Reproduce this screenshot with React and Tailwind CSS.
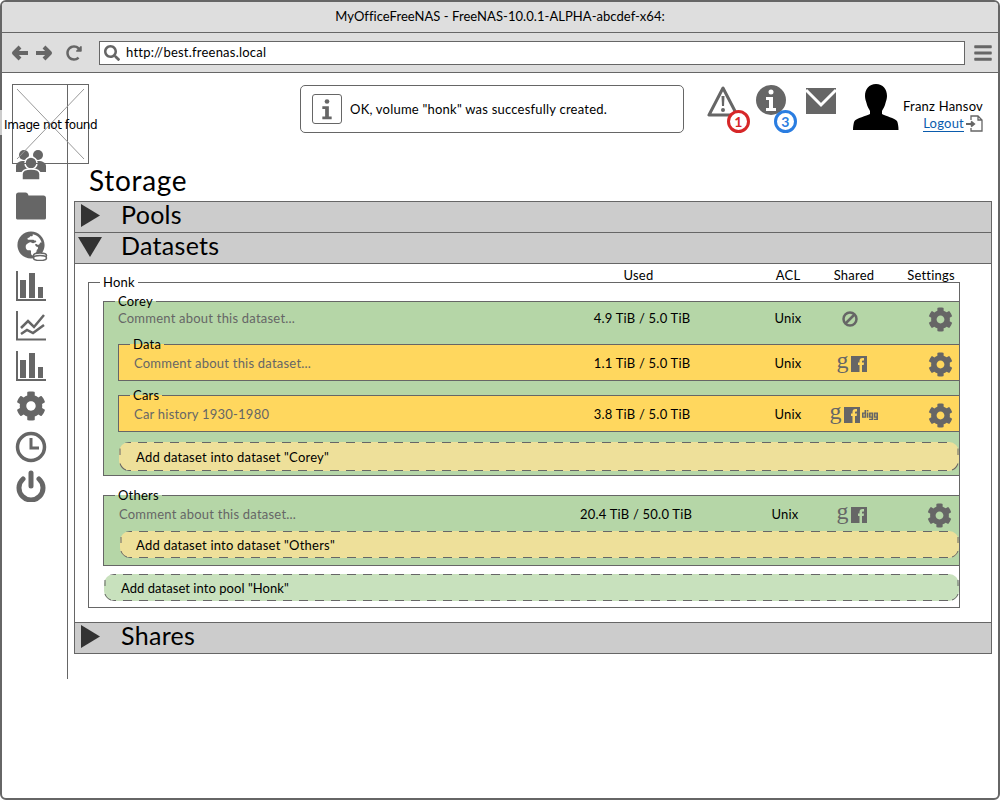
import { FaBars, FaCog, FaDigg, FaGlobeAfrica, FaRedoAlt, FaSearch } from 'react-icons/fa';

function UsersIcon() {
  return (
    <svg width="32" height="32" viewBox="0 0 32 32" fill="#666">
      <circle cx="9" cy="6" r="5" />
      <circle cx="23" cy="6" r="5" />
      <path d="M1 23v-6c0-3 3-5 8-5s8 2 8 5v6zM15 23v-6c0-3 3-5 8-5s8 2 8 5v6z" />
      <circle cx="16" cy="14" r="6" stroke="#fff" strokeWidth="1.500" />
      <path d="M7 31v-6c0-3 3-5 9-5s9 2 9 5v6z" stroke="#fff" strokeWidth="1.500" />
    </svg>
  );
}

function FolderIcon() {
  return (
    <svg width="32" height="30" viewBox="0 0 32 30" fill="#666">
      <path d="M1 4c0-1.500 1-2.500 2.500-2.500h7c1.500 0 2.500 1 3 3h15c1.500 0 2.500 1 2.500 2.500v20c0 1-1 1.500-2 1.500H3c-1 0-2-.5-2-1.500z" />
    </svg>
  );
}

function BarsIcon() {
  return (
    <svg width="32" height="30" viewBox="0 0 32 30" fill="#666">
      <path d="M1 0h2v28h28v2H1zM5 9h6v18H5zM14 2h6v25h-6zM23 16h5v11h-5z" />
    </svg>
  );
}

function LineIcon() {
  return (
    <svg width="32" height="30" viewBox="0 0 32 30" fill="none" stroke="#666">
      <path d="M2 0v28.500h29" strokeWidth="2" />
      <path d="M6 17l7-7 6 6 10-12M6 23l6-4 6 3 11-8" strokeWidth="2.500" />
    </svg>
  );
}

function ClockIcon() {
  return (
    <svg width="32" height="32" viewBox="0 0 32 32" fill="none" stroke="#666" strokeWidth="3.500">
      <circle cx="16" cy="16" r="13.500" />
      <path d="M16 7v10h8" strokeWidth="3" />
    </svg>
  );
}

function PowerIcon() {
  return (
    <svg width="30" height="32" viewBox="0 0 30 32" fill="none" stroke="#666" strokeWidth="5" strokeLinecap="round" className="-mt-[3px]">
      <path d="M15 3v13" />
      <path d="M7 9a12 12 0 1 0 16 0" />
    </svg>
  );
}

function ArrowIcon({ flip, className }) {
  return (
    <svg width="17" height="16" viewBox="0 0 17 16" fill="none" stroke="#666" strokeWidth="4" strokeLinejoin="round" className={`${flip ? '-scale-x-100' : ''} ${className}`}>
      <path d="M17 8H3M9 2L3 8l6 6" />
    </svg>
  );
}

function InfoGlyph({ color }) {
  return (
    <g fill={color}>
      <circle cx="15" cy="7" r="2.500" />
      <path d="M10 12h7v11h3v3H10v-3h3v-8h-3z" />
    </g>
  );
}

function WarningIcon() {
  return (
    <svg width="32" height="32" viewBox="0 0 32 32" fill="none">
      <path d="M16 3L2 30h28z" stroke="#666" strokeWidth="3" strokeLinejoin="round" />
      <path d="M14.500 11h3l-.5 10h-2z" fill="#666" />
      <circle cx="16" cy="25" r="2" fill="#666" />
    </svg>
  );
}

function MailIcon() {
  return (
    <svg width="32" height="26" viewBox="0 0 32 26">
      <path d="M1 0h30v26H1z" fill="#666" />
      <path d="M1 2l15 15L31 2" fill="none" stroke="#fff" strokeWidth="3" />
    </svg>
  );
}

function AvatarIcon() {
  return (
    <svg width="46" height="46" viewBox="0 0 46 46" fill="#000">
      <path d="M23 0c7 0 11 5 11 12 0 3-1 5-1.500 7-.5 3-2.500 6-3.500 8v3c3 2 13 4 15 7 1 2 1.500 6 1.500 9H0c0-3 .5-7 1.500-9 2-3 12-5 15.500-7v-3c-1-2-3-5-3.500-8C13 17 12 15 12 12 12 5 16 0 23 0z" />
    </svg>
  );
}

function LogoutIcon() {
  return (
    <svg width="17" height="17" viewBox="0 0 17 17" fill="none" stroke="#666" strokeWidth="1.300">
      <path d="M5 5V1h7l4 4v11H5v-3M12 1v4h4" />
      <path d="M0 9h7M5 6.500L8 9l-3 2.500" strokeWidth="2" />
    </svg>
  );
}

function BanIcon() {
  return (
    <svg width="16" height="16" viewBox="0 0 16 16" fill="none" stroke="#666" strokeWidth="2.500">
      <circle cx="8" cy="8" r="6.500" />
      <path d="M4 12l8-8" />
    </svg>
  );
}

function FacebookIcon() {
  return (
    <svg width="16" height="16" viewBox="0 0 16 16">
      <path fillRule="evenodd" fill="#666" d="M0 0h16v16H0zM8.500 16h2.500V9h1.700l.3-2.500h-2v-1c0-.7.3-1 1-1h1V2h-1.500c-2 0-3 1-3 3v1.500H7V9h1.500z" />
    </svg>
  );
}

function SideIcons() {
  return (
    <div className="flex flex-col items-center gap-[10px] pt-[65px] pr-[7px]">
      <UsersIcon />
      <FolderIcon />
      <div className="relative h-[30px]">
        <FaGlobeAfrica size={28} color="#666" />
        <svg className="absolute -right-[3px] bottom-0" width="16" height="9" viewBox="0 0 16 9" fill="#fff" stroke="#666" strokeWidth="1.500">
          <ellipse cx="8" cy="3.500" rx="6.500" ry="2.500" />
          <ellipse cx="8" cy="6" rx="6.500" ry="2.500" />
        </svg>
      </div>
      <BarsIcon />
      <LineIcon />
      <BarsIcon />
      <FaCog size={32} color="#666" className="h-[30px]" />
      <ClockIcon />
      <PowerIcon />
    </div>
  );
}

function SectionBar({ open, children }) {
  return (
    <div className="flex h-[32px] items-center border border-[#666] bg-[#ccc] -mt-px">
      <div className="-mt-[3px] flex w-[46px] shrink-0 justify-center pr-[16px]">
        {open ? (
          <svg width="24" height="20" viewBox="0 0 24 20"><path d="M0 0h24L12 20z" fill="#333" /></svg>
        ) : (
          <svg width="19" height="23" viewBox="0 0 19 23"><path d="M0 0l19 11.500L0 23z" fill="#333" /></svg>
        )}
      </div>
      <span className="-mt-[6px] text-[25px] leading-none tracking-[0.3px] text-black">{children}</span>
    </div>
  );
}

function GoogleMark() {
  return <span className="font-['Liberation_Serif',serif] text-[24px] leading-none -mt-[8px] text-[#666]">g</span>;
}

function Shared({ kind }) {
  if (kind === 'none') return <BanIcon />;
  return (
    <div className={kind === 'all' ? 'ml-[7px] flex items-center gap-[2px]' : 'ml-[3px] flex items-center gap-[2px]'}>
      <GoogleMark />
      <FacebookIcon />
      {kind === 'all' && <FaDigg size={16} color="#666" />}
    </div>
  );
}

function Row({ comment, used, shared, tight, rowClass }) {
  return (
    <div className={`flex items-center pt-[2px] text-[13px] ${rowClass}`}>
      <div className="flex-1 text-[#666]">{comment}</div>
      <div className={tight ? 'w-[120px] text-center text-black mr-[5px]' : 'w-[120px] text-center text-black'}>{used}</div>
      <div className={tight ? 'w-[60px] text-center text-black ml-[54px]' : 'w-[60px] text-center text-black ml-[56px]'}>Unix</div>
      <div className={tight ? 'flex w-[60px] justify-center ml-[5px]' : 'flex w-[60px] justify-center ml-[2px]'}>
        <Shared kind={shared} />
      </div>
      <div className={tight ? 'flex w-[40px] justify-center ml-[39px]' : 'flex w-[38px] justify-center ml-[41px]'}>
        <FaCog size={25} color="#666" />
      </div>
    </div>
  );
}

function Legend({ children, className }) {
  return <legend className={`h-[14px] px-[3px] text-[13px] leading-[14px] text-black ${className}`}>{children}</legend>;
}

function AddButton({ children, className }) {
  return (
    <div className={`relative flex items-center rounded-[10px] bg-no-repeat pt-[2px] text-[13px] text-black [background-image:repeating-linear-gradient(90deg,transparent_0_3px,#666_3px_12px,transparent_12px_16px),repeating-linear-gradient(90deg,transparent_0_3px,#666_3px_12px,transparent_12px_16px)] [background-position:0_0,0_100%] [background-size:100%_1px] ${className}`}>
      <svg className="absolute left-0 top-0 h-full w-[10px]" viewBox="0 0 10 27" preserveAspectRatio="none" fill="none" stroke="#666">
        <path d="M1 6v6M1 20c1 3 3 5 6 6" />
      </svg>
      <svg className="absolute right-0 top-0 h-full w-[10px]" viewBox="0 0 10 27" preserveAspectRatio="none" fill="none" stroke="#666">
        <path d="M9 6v6M9 20c-1 3-3 5-6 6" />
      </svg>
      {children}
    </div>
  );
}

export default function App() {
  return (
    <div className="h-[800px] w-[1000px] rounded-[6px] border-2 border-[#666] bg-white font-[Lato,sans-serif] tracking-[0.22px]">
      <div className="flex h-[31px] items-center justify-center rounded-t-[4px] border-b border-[#666] bg-[#dedede] text-[13px] tracking-[0.05px] text-black">
        MyOfficeFreeNAS - FreeNAS-10.0.1-ALPHA-abcdef-x64:
      </div>
      <div className="flex h-[40px] items-center border-b border-[#666] bg-[#dedede]">
        <div className="flex items-center pl-[9px]">
          <ArrowIcon />
          <ArrowIcon flip className="ml-[8px]" />
          <FaRedoAlt size={16} color="#666" className="ml-[13px]" />
        </div>
        <div className="ml-[17px] flex h-[24px] w-[866px] items-center border border-[#666] bg-white pl-[4px] text-[13px] text-black">
          <FaSearch size={16} color="#666" />
          <span className="ml-[6px]">http://best.freenas.local</span>
        </div>
        <FaBars size={20} color="#666" className="ml-[8px]" />
      </div>

      <div className="relative flex">
        <div className="absolute left-[10px] top-[11px] h-[80px] w-[77px] border border-[#666]">
          <svg className="absolute inset-0" width="75" height="78" viewBox="0 0 75 78" stroke="#999">
            <path d="M4 4l67 70M71 4L4 74" />
          </svg>
          <span className="absolute -left-[9px] top-[31px] font-['DejaVu_Sans',sans-serif] text-[12px] tracking-[-0.4px] whitespace-nowrap text-black">Image not found</span>
        </div>
        {/* the image label washes out the window border here */}
        <div className="absolute -left-[2px] top-[37px] h-[25px] w-[2px] bg-[#ccc]" />
        <aside className="mt-[11px] h-[595px] w-[66px] shrink-0 border-r border-[#666]">
          <SideIcons />
        </aside>

        <main className="w-[924px] pl-[6px]">
          <div className="flex h-[92px] items-start">
            <div className="ml-[226px] mt-[12px] flex h-[48px] w-[384px] items-center rounded-[5px] border border-[#666] pl-[11px] text-[13px] text-black">
              <div className="flex h-[30px] w-[30px] items-center justify-center rounded-[3px] border border-[#666]">
                <svg width="30" height="30" viewBox="0 0 30 30"><InfoGlyph color="#666" /></svg>
              </div>
              <span className="ml-[8px] pt-[2px]">OK, volume "honk" was succesfully created.</span>
            </div>
            <div className="relative ml-[23px] mt-[12px] h-[32px] w-[32px]">
              <WarningIcon />
              <span className="absolute left-[20px] top-[25px] flex h-[23px] w-[23px] items-center justify-center rounded-full border-[3px] border-[#d62728] bg-white text-[14px] font-bold leading-none text-[#d62728]">1</span>
            </div>
            <div className="relative ml-[17px] mt-[12px] h-[30px] w-[30px] rounded-full bg-[#666]">
              <svg width="30" height="30" viewBox="0 0 30 30"><InfoGlyph color="#fff" /></svg>
              <span className="absolute left-[18px] top-[25px] flex h-[23px] w-[23px] items-center justify-center rounded-full border-[3px] border-[#2a7de1] bg-white text-[14px] font-bold leading-none text-[#2a7de1]">3</span>
            </div>
            <div className="ml-[19px] mt-[15px]">
              <MailIcon />
            </div>
            <div className="ml-[16px] mt-[11px]">
              <AvatarIcon />
            </div>
            <div className="ml-[3px] mt-[25px] flex w-[81px] flex-col items-end text-[13px] leading-[16px] text-black">
              <span className="whitespace-nowrap">Franz Hansov</span>
              <div className="mt-[1px] flex items-center gap-[2px]">
                <span className="border-b border-[#0b5cad] leading-[15px] text-[#0b5cad]">Logout</span>
                <LogoutIcon />
              </div>
            </div>
          </div>

          <div className="h-[37px] pl-[15px] text-[28px] leading-[30px] tracking-[0.7px] text-black">Storage</div>

          <SectionBar>Pools</SectionBar>
          <SectionBar open>Datasets</SectionBar>

          <div className="border-x border-[#666] pb-[15px]">
            <div className="flex h-[22px] items-center pt-[2px] text-[13px] text-black">
              <div className="w-[624px] pl-[503px] text-center">Used</div>
              <div className="w-[40px] ml-[69px] text-center">ACL</div>
              <div className="w-[60px] ml-[16px] text-center">Shared</div>
              <div className="w-[60px] ml-[17px] text-center">Settings</div>
            </div>
            <fieldset className="-mt-[11px] ml-[13px] mr-[31px] border border-[#666] pb-[6px]">
              <Legend className="ml-[11px]">Honk</Legend>
              <fieldset className="ml-[14px] mt-[5px] border border-r-0 border-[#666] bg-[#b5d6a7] pb-[4px]">
                <Legend className="ml-[11px]">Corey</Legend>
                <Row rowClass="h-[20px] pl-[14px]" comment="Comment about this dataset..." used="4.9 TiB / 5.0 TiB" shared="none" />
                <fieldset className="ml-[14px] mt-[9px] border border-r-0 border-[#666] bg-[#ffd75e] pb-[5px]">
                  <Legend className="ml-[11px]">Data</Legend>
                  <Row rowClass="h-[24px] pl-[15px]" comment="Comment about this dataset..." used="1.1 TiB / 5.0 TiB" shared="two" />
                </fieldset>
                <fieldset className="ml-[14px] mt-[7px] border border-r-0 border-[#666] bg-[#ffd75e] pb-[5px]">
                  <Legend className="ml-[11px]">Cars</Legend>
                  <Row rowClass="h-[24px] pl-[15px]" comment="Car history 1930-1980" used="3.8 TiB / 5.0 TiB" shared="all" />
                </fieldset>
                <AddButton className="ml-[15px] mt-[10px] h-[29px] bg-[#eee09a] pl-[17px]">Add dataset into dataset "Corey"</AddButton>
              </fieldset>
              <fieldset className="ml-[14px] mt-[12px] border border-r-0 border-[#666] bg-[#b5d6a7] pb-[7px]">
                <Legend className="ml-[11px]">Others</Legend>
                <Row tight rowClass="h-[24px] pl-[15px]" comment="Comment about this dataset..." used="20.4 TiB / 50.0 TiB" shared="two" />
                <AddButton className="ml-[16px] mt-[5px] h-[27px] bg-[#eee09a] pl-[16px]">Add dataset into dataset "Others"</AddButton>
              </fieldset>
              <AddButton className="ml-[15px] mt-[8px] h-[27px] bg-[#c8e1bd] pl-[17px] tracking-[0.05px]">Add dataset into pool "Honk"</AddButton>
            </fieldset>
          </div>
          <SectionBar>Shares</SectionBar>
        </main>
      </div>
    </div>
  );
}
